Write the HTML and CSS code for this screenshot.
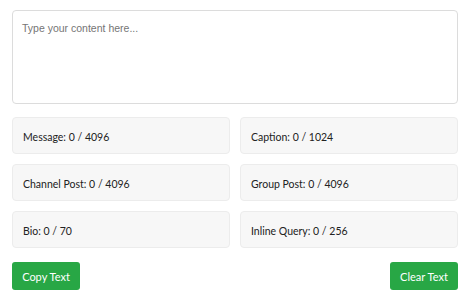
FILE: index.html
```html
<!DOCTYPE html>
<html>
<head>
<meta charset="utf-8">
<link rel="stylesheet" href="styles.css">
</head>
<body>
<div class="page">
  <textarea class="editor" placeholder="Type your content here..."></textarea>
  <div class="counters">
    <div class="counter">Message: 0 / 4096</div>
    <div class="counter">Caption: 0 / 1024</div>
    <div class="counter">Channel Post: 0 / 4096</div>
    <div class="counter">Group Post: 0 / 4096</div>
    <div class="counter">Bio: 0 / 70</div>
    <div class="counter">Inline Query: 0 / 256</div>
  </div>
  <div class="actions">
    <button class="btn">Copy Text</button>
    <button class="btn">Clear Text</button>
  </div>
</div>
</body>
</html>
```

FILE: styles.css
```css
html, body {
  margin: 0;
  padding: 0;
  background: #fff;
}
body {
  font-family: Lato, "Open Sans", sans-serif;
  color: #222;
}
.page {
  width: 446px;
  padding: 10px 16px 0 12px;
  display: flex;
  flex-direction: column;
}
.editor {
  box-sizing: border-box;
  width: 446px;
  height: 94px;
  margin: 0;
  padding: 11px 9px 9px;
  border: 1px solid #dcdcdc;
  border-radius: 4px;
  resize: none;
  font-family: "Liberation Sans", Arial, sans-serif;
  font-size: 10.5px;
  color: #333;
  outline: none;
}
.editor::placeholder {
  color: #757575;
}
.counters {
  margin-top: 13px;
  display: grid;
  grid-template-columns: 1fr 1fr;
  gap: 10px;
}
.counter {
  box-sizing: border-box;
  height: 37px;
  padding: 2px 10px 0;
  display: flex;
  align-items: center;
  background: #f7f7f7;
  border: 1px solid #ececec;
  border-radius: 4px;
  font-size: 10.5px;
  color: #222;
}
.actions {
  margin-top: 14px;
  display: flex;
  justify-content: space-between;
}
.btn {
  box-sizing: border-box;
  width: 68px;
  height: 28px;
  padding: 1px 0 0;
  border: none;
  border-radius: 3px;
  background: #28a745;
  color: #fff;
  font-family: Lato, "Open Sans", sans-serif;
  font-size: 11px;
}
```
